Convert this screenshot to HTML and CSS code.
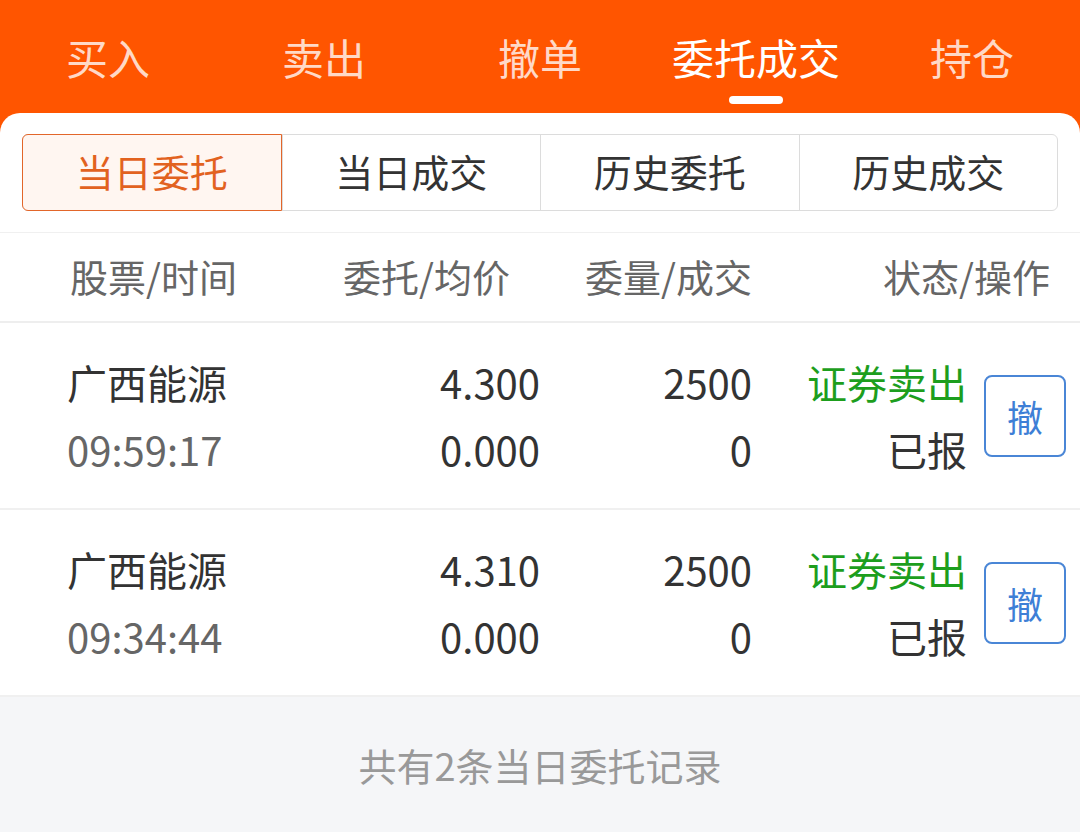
FILE: index.html
```html
<!DOCTYPE html>
<html lang="zh-CN">
  <head>
    <meta charset="UTF-8" />
    <meta name="viewport" content="width=device-width, initial-scale=1.0" />
    <title>委托成交</title>
    <link rel="stylesheet" href="styles.css">
  </head>
  <body>
    <div class="topbar">
      <div class="tab">买入</div>
      <div class="tab">卖出</div>
      <div class="tab">撤单</div>
      <div class="tab active">委托成交</div>
      <div class="tab">持仓</div>
    </div>
    <div class="card">
      <div class="segments">
        <div class="seg active">当日委托</div>
        <div class="seg">当日成交</div>
        <div class="seg">历史委托</div>
        <div class="seg">历史成交</div>
      </div>
      <div class="thead">
        <div>股票/时间</div>
        <div class="right">委托/均价</div>
        <div class="right">委量/成交</div>
        <div class="right">状态/操作</div>
      </div>
      <div class="row">
        <div class="cell">
          <div>广西能源</div>
          <div class="muted">09:59:17</div>
        </div>
        <div class="cell right">
          <div>4.300</div>
          <div>0.000</div>
        </div>
        <div class="cell right">
          <div>2500</div>
          <div>0</div>
        </div>
        <div class="cell right">
          <div class="sell">证券卖出</div>
          <div>已报</div>
        </div>
        <button class="cancel">撤</button>
      </div>
      <div class="row">
        <div class="cell">
          <div>广西能源</div>
          <div class="muted">09:34:44</div>
        </div>
        <div class="cell right">
          <div>4.310</div>
          <div>0.000</div>
        </div>
        <div class="cell right">
          <div>2500</div>
          <div>0</div>
        </div>
        <div class="cell right">
          <div class="sell">证券卖出</div>
          <div>已报</div>
        </div>
        <button class="cancel">撤</button>
      </div>
      <div class="footer">共有2条当日委托记录</div>
    </div>
  </body>
</html>
```

FILE: styles.css
```css
* {
  box-sizing: border-box;
}
body {
  margin: 0;
  font-family: "Noto Sans CJK SC", "Noto Sans", sans-serif;
  background: #ff5500;
  width: 1080px;
  height: 832px;
  overflow: hidden;
}
.topbar {
  display: flex;
  height: 113px;
  background: #ff5500;
}
.tab {
  flex: 1;
  text-align: center;
  font-size: 42px;
  line-height: 1;
  padding-top: 36px;
  color: rgba(255, 255, 255, 0.78);
  position: relative;
}
.tab.active {
  color: #fff;
}
.tab.active::after {
  content: "";
  position: absolute;
  left: 50%;
  top: 96px;
  width: 54px;
  height: 8px;
  margin-left: -27px;
  border-radius: 4px;
  background: #fff;
}
.card {
  background: #fff;
  border-radius: 20px 20px 0 0;
  height: 719px;
  display: flex;
  flex-direction: column;
  overflow: hidden;
}
.segments {
  display: flex;
  margin: 21px 22px 0;
  height: 77px;
  border: 1px solid #dcdcdc;
  border-radius: 6px;
}
.seg {
  flex: 1;
  display: flex;
  align-items: center;
  justify-content: center;
  padding-bottom: 5px;
  font-size: 38px;
  color: #333;
  border-left: 1px solid #dcdcdc;
}
.seg:first-child {
  border-left: none;
}
.seg.active {
  margin: -1px 0 -1px -1px;
  border: 1px solid #e2662a;
  border-radius: 6px 0 0 6px;
  background: #fff6f1;
  color: #e2621f;
}
.thead {
  display: grid;
  grid-template-columns: 230px 210px 242px 1fr;
  align-items: center;
  height: 91px;
  margin-top: 21px;
  padding: 0 30px 3px 70px;
  border-top: 1px solid #f0f0f0;
  border-bottom: 2px solid #eeeeee;
  font-size: 38px;
  color: #666;
}
.right {
  text-align: right;
}
.row {
  display: grid;
  grid-template-columns: 233px 240px 212px 215px 99px;
  align-items: center;
  height: 187px;
  padding-left: 67px;
  border-bottom: 2px solid #f0f0f0;
  font-size: 40px;
  line-height: 67px;
  color: #333;
}
.row:last-of-type {
  border-bottom: none;
}
.muted {
  color: #666;
}
.sell {
  color: #1d9e1d;
}
.cancel {
  justify-self: end;
  width: 82px;
  height: 82px;
  padding: 0;
  border: 2px solid #4a86d6;
  border-radius: 8px;
  background: #fff;
  color: #3e7fd6;
  font-family: inherit;
  font-size: 36px;
}
.footer {
  flex: 1;
  background: #f5f6f8;
  text-align: center;
  font-size: 38px;
  color: #999;
  padding-top: 40px;
}
```
